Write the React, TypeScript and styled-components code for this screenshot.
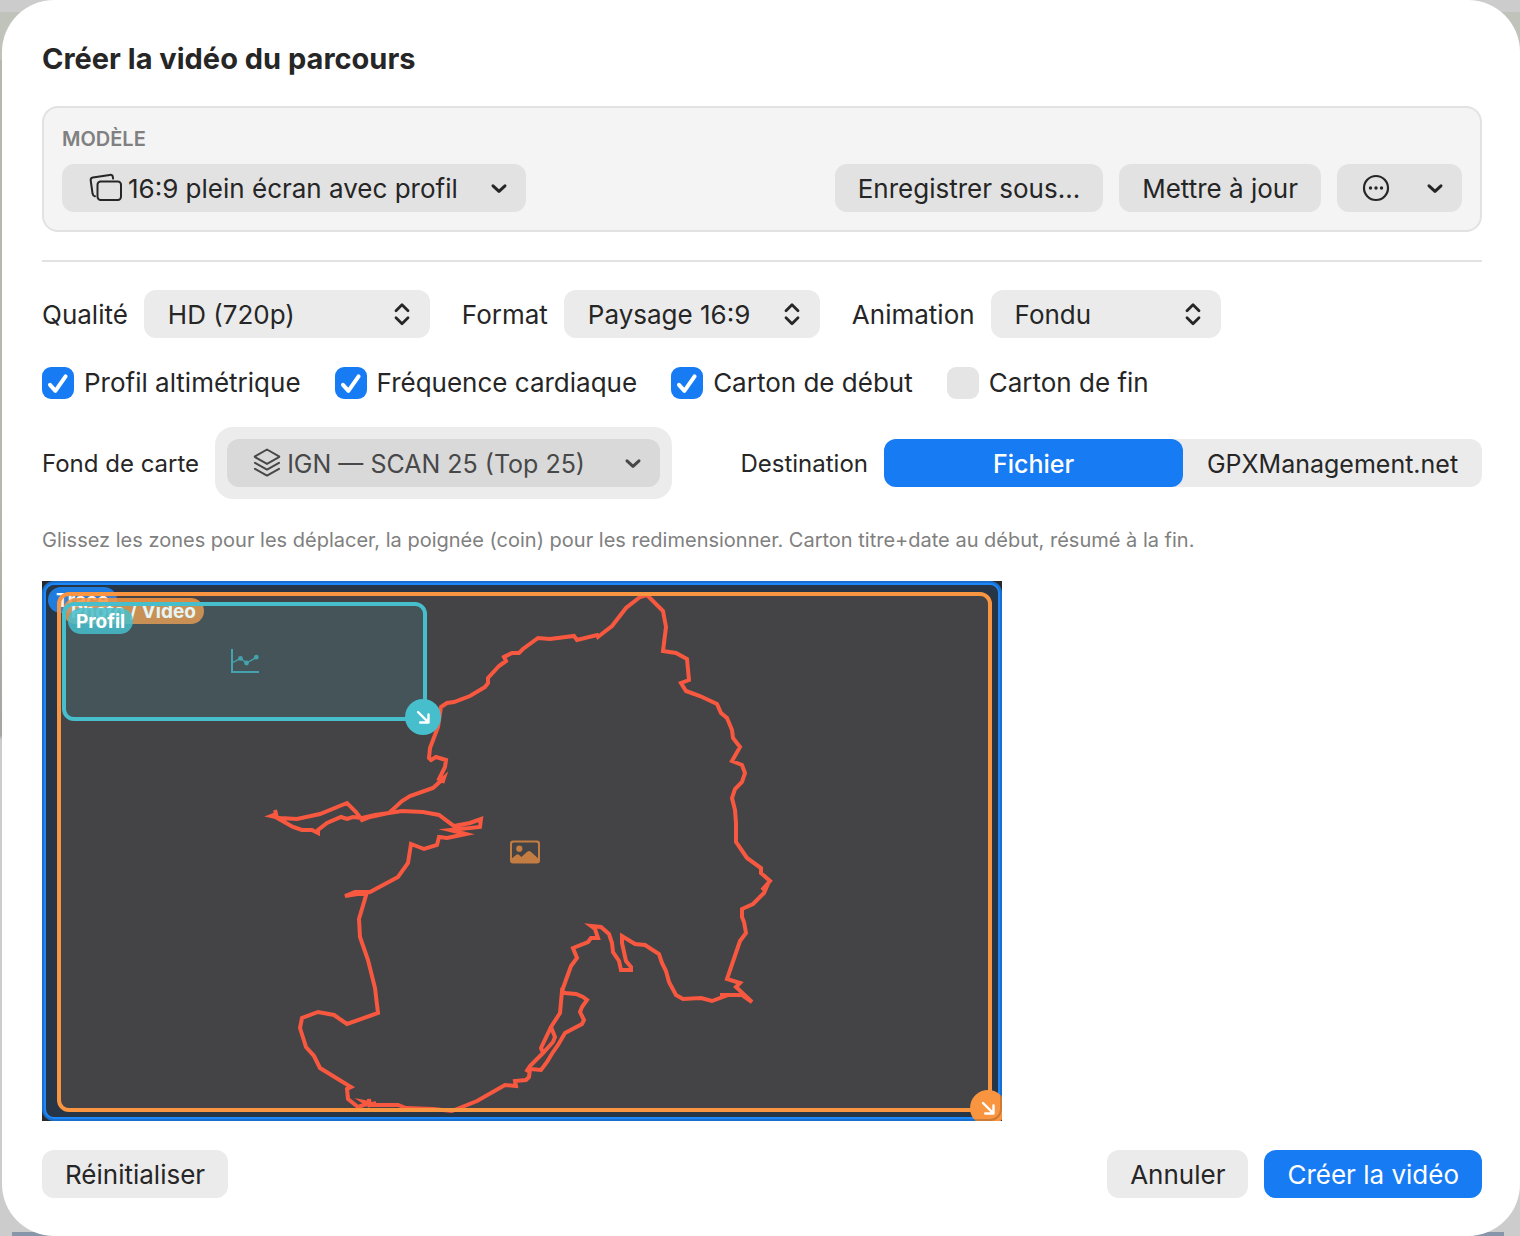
import React, { useState } from "react";
import styled, { createGlobalStyle, css } from "styled-components";

const color = {
  ink: "#262626",
  pressedInk: "#484848",
  muted: "#808080",
  accent: "#177bf3",
  control: "#ebebeb",
  controlDark: "#e2e2e2",
  line: "#e2e2e2",
};

const GlobalStyle = createGlobalStyle`
  *, *::before, *::after { box-sizing: border-box; }
  body {
    margin: 0;
    font-family: Inter, "Liberation Sans", sans-serif;
    color: ${color.ink};
    background: #cccccc;
  }
  button, input, select { font: inherit; color: inherit; margin: 0; }
`;

const Backdrop = styled.div`
  min-height: 100vh;
  display: flex;
  padding-left: 2px;
  background:
    linear-gradient(#8796a8, #8796a8) 12px 100% / 40px 4px no-repeat,
    linear-gradient(#8796a8, #8796a8) calc(100% - 16px) 100% / 30px 4px no-repeat,
    linear-gradient(#cccccc 0 12px, #c0c3ba 12px 60px, #b5b7b1 60px 500px, #a4a6a1 735px, #cccccc 740px);
`;

const Sheet = styled.main`
  flex: 1;
  min-width: 0;
  background: #ffffff;
  border-radius: 52px;
  padding: 40px 38px 38px 40px;
  display: flex;
  flex-direction: column;
`;

const Title = styled.h1`
  margin: 0;
  font-size: 29px;
  line-height: 38px;
  font-weight: 700;
`;

const Card = styled.section`
  margin-top: 28px;
  padding: 18px;
  border: 2px solid ${color.line};
  border-radius: 16px;
  background: #f4f4f4;
`;

const CardTitle = styled.label`
  display: block;
  font-size: 20px;
  line-height: 26px;
  font-weight: 600;
  color: ${color.muted};
`;

const Spread = styled.div`
  display: flex;
  flex-wrap: wrap;
  align-items: center;
  justify-content: space-between;
  gap: 16px;
`;

const CardRow = styled(Spread)`
  margin-top: 12px;
`;

const Group = styled.div<{ $gap?: number }>`
  display: flex;
  flex-wrap: wrap;
  align-items: center;
  gap: ${(p) => p.$gap ?? 16}px;
`;

const Button = styled.button<{ $tone?: "dark" | "primary" }>`
  height: 48px;
  padding: 2px 23px 0;
  border: 0;
  border-radius: 12px;
  font-size: 26px;
  line-height: 32px;
  background: ${color.control};
  ${(p) => p.$tone === "dark" && css`background: ${color.controlDark};`}
  ${(p) =>
    p.$tone === "primary" &&
    css`
      background: ${color.accent};
      color: #ffffff;
    `}
`;

const MoreButton = styled(Button)`
  display: flex;
  align-items: center;
  justify-content: space-between;
  width: 125px;
  padding: 0 18px 0 25px;
`;

const Divider = styled.hr`
  width: 100%;
  height: 2px;
  margin: 28px 0;
  border: 0;
  background: ${color.line};
`;

const Field = styled.div`
  display: flex;
  align-items: center;
  gap: 16px;
`;

const FieldLabel = styled.label<{ $small?: boolean }>`
  padding-top: 2px;
  font-size: ${(p) => (p.$small ? 24 : 26)}px;
  line-height: 32px;
`;

const SelectBox = styled.div<{ $width: number; $pressed?: boolean }>`
  display: grid;
  align-items: center;
  width: ${(p) => p.$width}px;
  color: ${(p) => (p.$pressed ? color.pressedInk : color.ink)};

  & > * { grid-area: 1 / 1; }
  & > svg { pointer-events: none; }
  & > svg:first-of-type { justify-self: end; margin-right: 18px; }
  & > svg:nth-of-type(2) { justify-self: start; margin-left: 26px; }
`;

const Select = styled.select<{ $tone?: "dark" | "pressed"; $icon?: "wide" | "narrow" }>`
  appearance: none;
  width: 100%;
  height: 48px;
  padding: 2px 48px 0 24px;
  border: 0;
  border-radius: 12px;
  font-size: 26px;
  line-height: 32px;
  background: ${color.control};
  ${(p) => p.$tone === "dark" && css`background: ${color.controlDark};`}
  ${(p) => p.$tone === "pressed" && css`background: #d9d9d9; font-size: 25px;`}
  ${(p) => p.$icon && css`padding-left: ${p.$icon === "wide" ? 66 : 60}px;`}
`;

const CheckRow = styled(Group)`
  margin-top: 29px;
`;

const CheckLabel = styled.label`
  display: flex;
  align-items: center;
  gap: 10px;
  font-size: 26px;
  line-height: 32px;
`;

const CheckBox = styled.span`
  display: grid;
  & > * { grid-area: 1 / 1; }
  & > svg { pointer-events: none; }
`;

const CheckInput = styled.input`
  appearance: none;
  width: 32px;
  height: 32px;
  border-radius: 9px;
  background: #e5e5e5;
  &:checked { background: ${color.accent}; }
`;

const MapRow = styled(Spread)`
  margin-top: 28px;
`;

const Halo = styled.div`
  padding: 12px;
  border-radius: 18px;
  background: #ececec;
`;

const Segments = styled.div`
  display: grid;
  grid-template-columns: 1fr 1fr;
  width: 598px;
  border-radius: 12px;
  background: ${color.control};
`;

const Segment = styled.button<{ $active: boolean }>`
  height: 48px;
  padding: 2px 0 0;
  border: 0;
  border-radius: 12px;
  font-size: 25px;
  line-height: 32px;
  background: ${(p) => (p.$active ? color.accent : "transparent")};
  color: ${(p) => (p.$active ? "#ffffff" : color.ink)};
  font-weight: ${(p) => (p.$active ? 500 : 400)};
`;

const Hint = styled.p`
  margin: 28px 0;
  font-size: 20px;
  line-height: 26px;
  color: ${color.muted};
`;

const Preview = styled.div`
  position: relative;
  width: 960px;
  height: 540px;
  overflow: hidden;
  background: #292929;

  &::after {
    content: "";
    position: absolute;
    inset: 0;
    border: 2px solid rgba(0, 0, 0, 0.18);
    border-radius: 12px;
    pointer-events: none;
  }
`;

const Track = styled.svg`
  position: absolute;
  inset: 0;
`;

const Zone = styled.div<{ $x: number; $y: number; $w: number; $h: number; $rgb: string; $fill: number }>`
  position: absolute;
  left: ${(p) => p.$x}px;
  top: ${(p) => p.$y}px;
  width: ${(p) => p.$w}px;
  height: ${(p) => p.$h}px;
  display: grid;
  place-items: center;
  border: 4px solid rgb(${(p) => p.$rgb});
  border-radius: 12px;
  background: rgba(${(p) => p.$rgb}, ${(p) => p.$fill});
  background-clip: padding-box;
`;

const Tag = styled.span<{ $rgb: string }>`
  position: absolute;
  left: 2px;
  top: 2px;
  padding: 2px 8px 0;
  border-radius: 13px;
  font-size: 19px;
  line-height: 24px;
  font-weight: 700;
  white-space: nowrap;
  color: #ffffff;
  background: rgba(${(p) => p.$rgb}, 0.85);
`;

const Handle = styled.button<{ $rgb: string }>`
  position: absolute;
  right: -18px;
  bottom: -18px;
  width: 36px;
  height: 36px;
  padding: 0;
  border: 0;
  border-radius: 50%;
  display: grid;
  place-items: center;
  background: rgb(${(p) => p.$rgb});
`;

const Footer = styled(Spread)`
  margin-top: 29px;
`;

const Chevron = () => (
  <svg width="18" height="18" viewBox="0 0 18 18" fill="none" stroke="currentColor" strokeWidth="3" strokeLinecap="round" strokeLinejoin="round" aria-hidden>
    <path d="M3 6.8 9 12.4 15 6.8" />
  </svg>
);

const UpDown = () => (
  <svg width="20" height="24" viewBox="0 0 20 24" fill="none" stroke={color.ink} strokeWidth="2.8" strokeLinecap="round" strokeLinejoin="round" aria-hidden>
    <path d="M4 8.8 10 2.8 16 8.8M4 15.8 10 21.8 16 15.8" />
  </svg>
);

const FramesIcon = () => (
  <svg width="34" height="30" viewBox="0 0 34 30" fill="none" stroke={color.ink} strokeWidth="2" strokeLinejoin="round" strokeLinecap="round" aria-hidden>
    <rect x="9.5" y="8.5" width="23.5" height="18.5" rx="3.2" />
    <path d="M7 23.2 6.6 23.2C5.3 23 4.9 22 4.6 20.8L2.7 7.5C2.5 5.6 3.2 4.8 4.8 4.5L21.8 1.9C23.6 1.7 24.5 2.3 24.8 3.9L25.1 5.6" />
  </svg>
);

const LayersIcon = () => (
  <svg width="28" height="30" viewBox="0 0 28 30" fill="none" stroke="currentColor" strokeWidth="2" strokeLinejoin="round" strokeLinecap="round" aria-hidden>
    <path d="M14 1.5 26 8.3Q26.4 8.7 26 9.1L14 15.9 2 9.1Q1.6 8.7 2 8.3Z" />
    <path d="M2 14.8 14 21.6 26 14.8M2 20.8 14 27.6 26 20.8" />
  </svg>
);

const MoreIcon = () => (
  <svg width="28" height="28" viewBox="0 0 28 28" fill={color.ink} aria-hidden>
    <circle cx="14" cy="14" r="12" fill="none" stroke={color.ink} strokeWidth="2.2" />
    <circle cx="8.5" cy="14" r="1.7" />
    <circle cx="14" cy="14" r="1.7" />
    <circle cx="19.5" cy="14" r="1.7" />
  </svg>
);

const Tick = () => (
  <svg width="32" height="32" viewBox="0 0 32 32" fill="none" stroke="#ffffff" strokeWidth="4" strokeLinecap="round" strokeLinejoin="round" aria-hidden>
    <path d="M8 17.8 13.4 23.8 23.6 9.4" />
  </svg>
);

const ChartIcon = () => (
  <svg width="30" height="26" viewBox="0 0 30 26" fill="none" stroke="rgb(70,190,204)" strokeWidth="2" opacity="0.75" aria-hidden>
    <path d="M2 0V23H29" />
    <path d="M2 14 10.5 9.3 16.5 14 26.5 8.3" strokeWidth="1.4" />
    <g fill="rgb(70,190,204)" stroke="none">
      <circle cx="10.5" cy="9.4" r="2.4" />
      <circle cx="16.5" cy="14" r="2.4" />
      <circle cx="26.3" cy="8.2" r="2.4" />
    </g>
  </svg>
);

const PhotoIcon = () => (
  <svg width="30" height="24" viewBox="0 0 30 24" opacity="0.7" fill="rgb(249,149,64)" aria-hidden>
    <path fillRule="evenodd" d="M3 0.5h24q3 0 3 3v17q0 3-3 3h-24q-3 0-3-3v-17q0-3 3-3ZM3.6 2.4Q2 2.4 2 4V18.3L6 15Q7.6 13.6 9.1 15L11.4 17 17.2 11.7Q19 10.1 20.8 11.7L28 18.2V4Q28 2.4 26.4 2.4Z" />
    <circle cx="9.3" cy="8.7" r="3.1" />
  </svg>
);

const ResizeArrow = () => (
  <svg width="14" height="14" viewBox="0 0 14 14" fill="none" stroke="#ffffff" strokeWidth="2.4" strokeLinecap="round" strokeLinejoin="round" aria-hidden>
    <path d="M2 2 12.2 12.2M12.5 4.5V12.5H4.2" />
  </svg>
);

const trackPath =
  "M647 595 640 597 626 608 612 626 603 633 598 637 597 635 577 640 574 636 550 639 538 638 523 649 519 653 512 653 504 657 506 661 499 666 488 678 488 683 485 687 470 696 454 702 447 703 441 707 438 727 430 748 429 758 431 760 436 757 446 760 445 767 439 779 443 781 444 778 433 788 410 796 402 801 389 813 370 817 362 820 356 812 347 803 320 814 297 819 280 818 271 816 276 814 275 810 277 818 293 827 302 830 312 830 318 833 318 830 327 823 341 817 347 819 353 817 362 818 375 815 389 813 402 811 423 812 439 815 454 826 470 823 481 819 480 827 450 830 466 834 447 838 439 837 437 845 424 849 411 844 408 863 398 877 370 892 345 896 355 892 367 892 359 919 360 937 368 960 375 988 378 1013 347 1024 334 1015 318 1012 302 1018 300 1028 306 1047 314 1056 320 1068 351 1087 347 1089 348 1099 358 1107 367 1104 364 1102 369 1103 369 1099 370 1105 376 1103 373 1105 398 1105 406 1108 433 1109 452 1111 477 1101 505 1085 516 1086 515 1081 526 1080 529 1077 530 1069 541 1070 547 1062 553 1052 558 1045 565 1033 582 1024 584 1020 580 1012 582 1007 587 1000 583 997 576 994 565 993 562 991 560 1013 551 1027 541 1048 543 1053 530 1066 526 1072 530 1066 543 1053 553 1042 555 1037 551 1027 560 1013 562 991 571 966 577 958 573 948 588 942 591 938 598 938 595 929 591 926 601 927 609 934 612 943 613 952 619 961 621 970 631 970 631 967 626 961 622 943 622 936 635 944 645 945 659 954 662 963 666 971 669 982 676 995 683 999 701 998 712 1001 728 995 720 995 742 995 752 1002 736 987 740 983 727 979 740 941 746 933 744 922 742 917 742 909 753 904 764 893 767 886 762 890 770 881 761 873 761 868 747 858 736 842 736 823 735 810 732 798 735 789 742 782 745 773 742 765 732 761 740 747 733 738 732 730 727 718 721 713 717 704 700 696 686 691 681 683 689 680 687 659 676 653 663 651 666 627 663 611 647 595Z";

const BLUE = "30, 136, 250";
const ORANGE = "249, 149, 64";
const TEAL = "70, 190, 204";

const checks = [
  { id: "profil", label: "Profil altimétrique", on: true },
  { id: "frequence", label: "Fréquence cardiaque", on: true },
  { id: "debut", label: "Carton de début", on: true },
  { id: "fin", label: "Carton de fin", on: false },
];

const pickers = [
  { id: "qualite", label: "Qualité", value: "HD (720p)", width: 286 },
  { id: "format", label: "Format", value: "Paysage 16:9", width: 256 },
  { id: "animation", label: "Animation", value: "Fondu", width: 230 },
];

const destinations = ["Fichier", "GPXManagement.net"];

export default function App() {
  const [options, setOptions] = useState(checks);
  const [destination, setDestination] = useState(destinations[0]);

  const toggle = (id: string) =>
    setOptions(options.map((o) => (o.id === id ? { ...o, on: !o.on } : o)));

  return (
    <>
      <GlobalStyle />
      <Backdrop>
        <Sheet>
          <Title>Créer la vidéo du parcours</Title>

          <Card>
            <CardTitle htmlFor="modele">MODÈLE</CardTitle>
            <CardRow>
              <SelectBox $width={464}>
                <Select id="modele" $tone="dark" $icon="wide">
                  <option>16:9 plein écran avec profil</option>
                </Select>
                <Chevron />
                <FramesIcon />
              </SelectBox>
              <Group>
                <Button $tone="dark">Enregistrer sous...</Button>
                <Button $tone="dark">Mettre à jour</Button>
                <MoreButton $tone="dark" aria-label="Autres actions">
                  <MoreIcon />
                  <Chevron />
                </MoreButton>
              </Group>
            </CardRow>
          </Card>

          <Divider />

          <Group $gap={32}>
            {pickers.map((p) => (
              <Field key={p.id}>
                <FieldLabel htmlFor={p.id}>{p.label}</FieldLabel>
                <SelectBox $width={p.width}>
                  <Select id={p.id}>
                    <option>{p.value}</option>
                  </Select>
                  <UpDown />
                </SelectBox>
              </Field>
            ))}
          </Group>

          <CheckRow $gap={34}>
            {options.map((o) => (
              <CheckLabel key={o.id}>
                <CheckBox>
                  <CheckInput type="checkbox" checked={o.on} onChange={() => toggle(o.id)} />
                  {o.on && <Tick />}
                </CheckBox>
                {o.label}
              </CheckLabel>
            ))}
          </CheckRow>

          <MapRow>
            <Field>
              <FieldLabel htmlFor="fond" $small>Fond de carte</FieldLabel>
              <Halo>
                <SelectBox $width={433} $pressed>
                  <Select id="fond" $tone="pressed" $icon="narrow">
                    <option>IGN — SCAN 25 (Top 25)</option>
                  </Select>
                  <Chevron />
                  <LayersIcon />
                </SelectBox>
              </Halo>
            </Field>
            <Field>
              <FieldLabel as="span" id="destination" $small>Destination</FieldLabel>
              <Segments role="group" aria-labelledby="destination">
                {destinations.map((d) => (
                  <Segment key={d} $active={d === destination} aria-pressed={d === destination} onClick={() => setDestination(d)}>
                    {d}
                  </Segment>
                ))}
              </Segments>
            </Field>
          </MapRow>

          <Hint>
            Glissez les zones pour les déplacer, la poignée (coin) pour les redimensionner. Carton titre+date au début, résumé à la fin.
          </Hint>

          <Preview>
            <Zone $x={0} $y={0} $w={960} $h={540} $rgb={BLUE} $fill={0.14}>
              <Tag $rgb={BLUE}>Trace</Tag>
            </Zone>
            <Track width="960" height="540" viewBox="42 581 960 540" fill="none" stroke="#f84f40" strokeWidth="4" strokeMiterlimit="7" aria-hidden>
              <path d={trackPath} />
            </Track>
            <Zone $x={15} $y={11} $w={935} $h={520} $rgb={ORANGE} $fill={0.14}>
              <Tag $rgb={ORANGE}>Photo / Vidéo</Tag>
              <PhotoIcon />
              <Handle $rgb={ORANGE} aria-label="Redimensionner Photo / Vidéo"><ResizeArrow /></Handle>
            </Zone>
            <Zone $x={20} $y={21} $w={365} $h={119} $rgb={TEAL} $fill={0.14}>
              <Tag $rgb={TEAL}>Profil</Tag>
              <ChartIcon />
              <Handle $rgb={TEAL} aria-label="Redimensionner Profil"><ResizeArrow /></Handle>
            </Zone>
          </Preview>

          <Footer>
            <Button>Réinitialiser</Button>
            <Group>
              <Button>Annuler</Button>
              <Button $tone="primary">Créer la vidéo</Button>
            </Group>
          </Footer>
        </Sheet>
      </Backdrop>
    </>
  );
}
